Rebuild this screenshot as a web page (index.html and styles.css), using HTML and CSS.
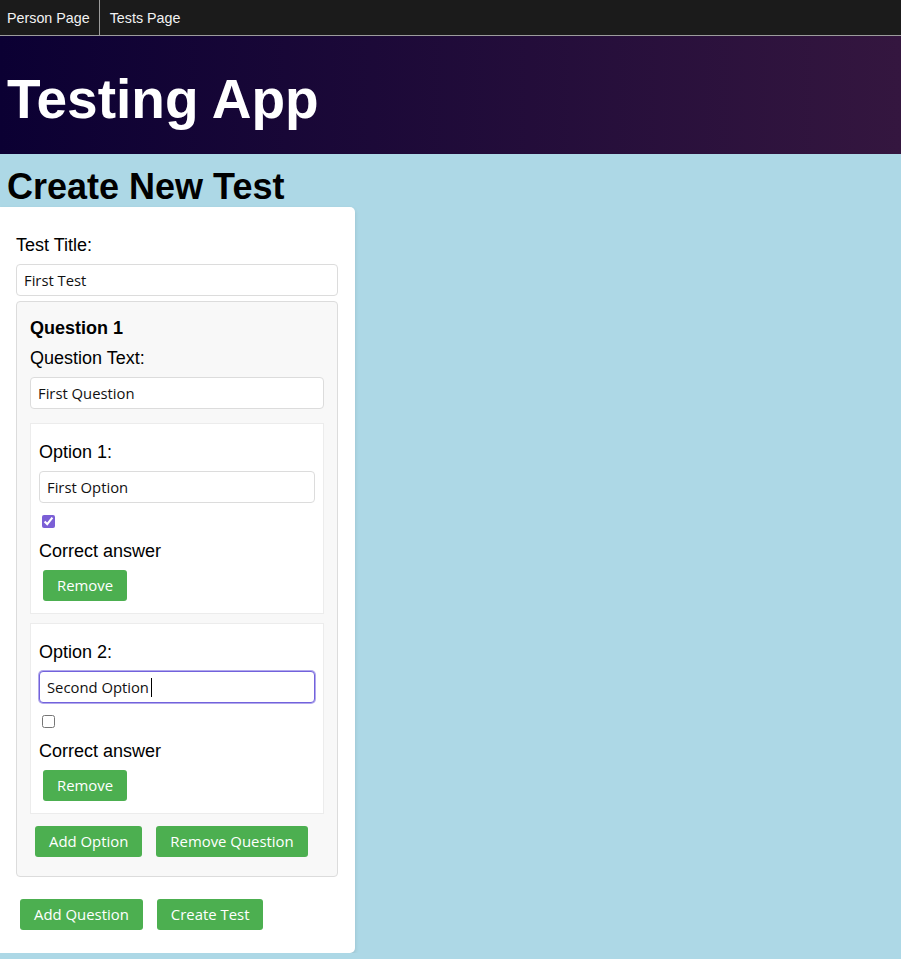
FILE: index.html
```html
<!DOCTYPE html>
<html lang="en">
<head>
<meta charset="utf-8">
<title>Testing App</title>
<link rel="stylesheet" href="styles.css">
</head>
<body>
<nav class="nav">
  <a class="nav-link nav-link-first" href="#">Person Page</a>
  <a class="nav-link" href="#">Tests Page</a>
</nav>
<header class="header">
  <h1 class="app-title">Testing App</h1>
</header>
<h1 class="page-title">Create New Test</h1>
<form class="card">
  <label class="label title-label">Test Title:</label>
  <input class="text-input title-input" type="text" value="First Test">
  <div class="question">
    <div class="q-title">Question 1</div>
    <label class="label q-label">Question Text:</label>
    <input class="text-input q-input" type="text" value="First Question">
    <div class="option">
      <label class="label opt-label">Option 1:</label>
      <input class="text-input" type="text" value="First Option">
      <input class="check" type="checkbox" checked>
      <label class="label correct-label">Correct answer</label>
      <button class="btn btn-remove" type="button">Remove</button>
    </div>
    <div class="option">
      <label class="label opt-label">Option 2:</label>
      <div class="input-wrap">
        <input class="text-input focused" type="text" value="Second Option">
        <span class="caret"></span>
      </div>
      <input class="check" type="checkbox">
      <label class="label correct-label">Correct answer</label>
      <button class="btn btn-remove" type="button">Remove</button>
    </div>
    <div class="actions q-actions">
      <button class="btn" type="button">Add Option</button>
      <button class="btn" type="button">Remove Question</button>
    </div>
  </div>
  <div class="actions card-actions">
    <button class="btn" type="button">Add Question</button>
    <button class="btn" type="button">Create Test</button>
  </div>
</form>
</body>
</html>
```

FILE: styles.css
```css
body {
  margin: 0;
  background: #add8e6;
  font-family: "Liberation Sans", Arial, sans-serif;
  color: #000;
}

.nav {
  display: flex;
  height: 35px;
  background: #1b1b1b;
  border-bottom: 1px solid #9c9c9c;
}

.nav-link {
  color: #f2f2f2;
  text-decoration: none;
  font-size: 14.3px;
  line-height: 36px;
  padding: 0 10px;
}

.nav-link-first {
  padding-left: 7px;
  padding-right: 9px;
  border-right: 1px solid #9c9c9c;
}

.header {
  background: linear-gradient(to right, #0b0033, #34163f);
  padding: 32px 7px 24px;
}

.app-title {
  margin: 0;
  color: #fff;
  font-size: 55px;
  line-height: 62px;
  font-weight: bold;
}

.page-title {
  margin: 12px 0 0;
  padding-left: 7px;
  font-size: 36px;
  line-height: 41px;
  font-weight: bold;
}

.card {
  width: 355px;
  box-sizing: border-box;
  background: #fff;
  padding: 27px 17px 23px 16px;
  border-radius: 0 5px 5px 0;
  box-shadow: 0 2px 4px rgba(0, 0, 0, 0.12);
  margin: 0;
}

.label {
  display: block;
  font-size: 18px;
  line-height: 21px;
}

.title-label {
  margin: 1px 0 8px;
}

.text-input {
  display: block;
  width: 100%;
  box-sizing: border-box;
  height: 32px;
  margin: 0;
  padding: 0 7px;
  border: 1px solid #dcdcdc;
  border-radius: 4px;
  background: #fff;
  font-family: "Open Sans", "Noto Sans", sans-serif;
  font-size: 14.8px;
  color: #111;
  outline: none;
}

.title-input {
  margin-bottom: 5px;
}

.question {
  background: #f8f8f8;
  border: 1px solid #dcdcdc;
  border-radius: 4px;
  padding: 13px;
}

.q-title {
  margin-top: 3px;
  font-size: 18px;
  line-height: 21px;
  font-weight: bold;
}

.q-label {
  margin: 9px 0 8px;
}

.q-input {
  margin-bottom: 14px;
}

.option {
  background: #fff;
  border: 1px solid #ececec;
  padding: 8px;
  margin-bottom: 9px;
}

.opt-label {
  margin: 10px 0 8px;
}

.input-wrap {
  position: relative;
}

.focused {
  border-color: #7262dc;
  box-shadow: 0 0 0 1px rgba(114, 98, 220, 0.55);
}

.caret {
  position: absolute;
  left: 112px;
  top: 7px;
  width: 1px;
  height: 19px;
  background: #000;
}

.check {
  display: block;
  width: 13px;
  height: 13px;
  margin: 12px 0 0 3px;
  accent-color: #7b5fd6;
}

.correct-label {
  margin-top: 13px;
}

.btn {
  background: #4caf50;
  color: #fff;
  border: none;
  border-radius: 3px;
  padding: 6px 14px;
  font-family: "Open Sans", "Noto Sans", sans-serif;
  font-size: 14.9px;
  line-height: 19px;
  cursor: pointer;
}

.btn-remove {
  display: block;
  margin: 8px 0 4px 4px;
}

.actions {
  display: flex;
  gap: 14px;
}

.q-actions {
  margin: 12px 0 6px 5px;
}

.card-actions {
  margin: 22px 0 0 4px;
}
```
